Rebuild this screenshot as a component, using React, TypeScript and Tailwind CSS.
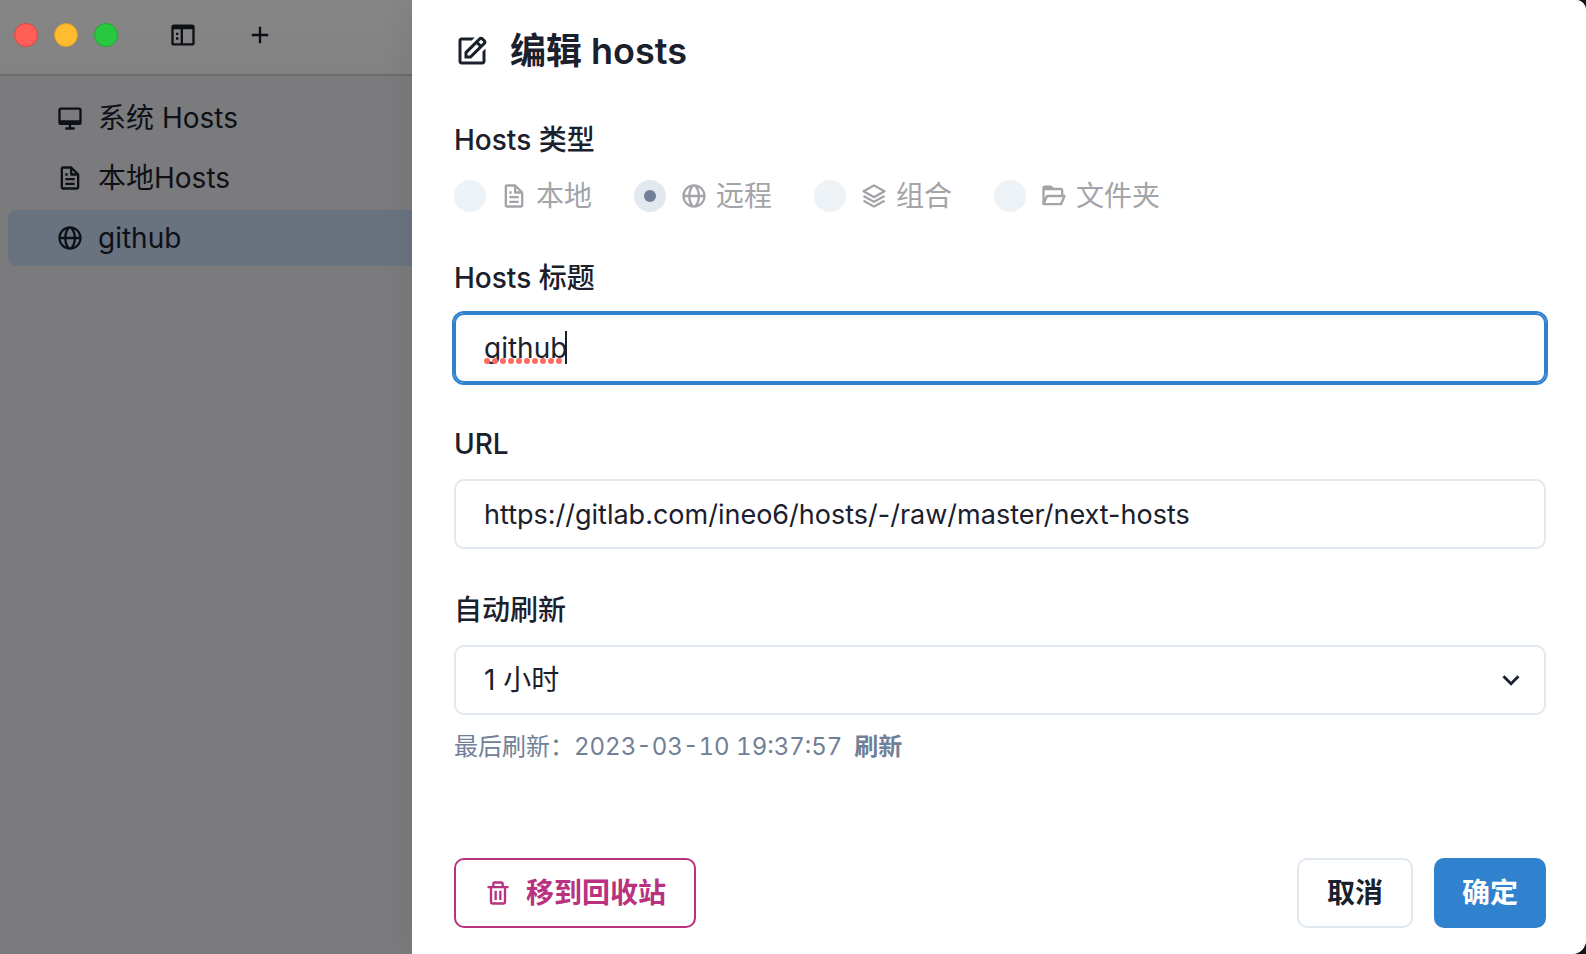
import React from "react";
import {
  BiDesktop,
  BiEdit,
  BiFile,
  BiFolderOpen,
  BiGlobe,
  BiLayer,
  BiPlus,
  BiSidebar,
  BiTrash,
} from "react-icons/bi";

const treeItems = [
  { name: "系统 Hosts", Icon: BiDesktop, selected: false },
  { name: "本地Hosts", Icon: BiFile, selected: false },
  { name: "github", Icon: BiGlobe, selected: true },
];

const hostTypes = [
  { value: "local", name: "本地", Icon: BiFile },
  { value: "remote", name: "远程", Icon: BiGlobe },
  { value: "group", name: "组合", Icon: BiLayer },
  { value: "folder", name: "文件夹", Icon: BiFolderOpen },
];

function Sidebar() {
  return (
    <aside className="flex w-[412px] shrink-0 flex-col bg-[#7b7b7d] text-[#0d1016]">
      <header className="flex h-[76px] items-center border-b-2 border-[#6b6b6b] bg-gradient-to-b from-[#868686] to-[#828282] pb-1 pl-3.5">
        <div className="flex gap-4">
          <span className="size-6 rounded-full border border-[#e0443e] bg-[#ff5f57]" />
          <span className="size-6 rounded-full border border-[#dea123] bg-[#febc2e]" />
          <span className="size-6 rounded-full border border-[#1aab29] bg-[#28c840]" />
        </div>
        <div className="ml-[51px] flex gap-[49px]">
          <button type="button" aria-label="Toggle sidebar">
            <BiSidebar className="size-7" />
          </button>
          <button type="button" aria-label="Add">
            <BiPlus className="size-7" />
          </button>
        </div>
      </header>
      <ul className="flex flex-col gap-1 pt-3.5 pl-2">
        {treeItems.map(({ name, Icon, selected }) => (
          <li key={name}>
            <button
              type="button"
              className={
                selected
                  ? "flex h-14 w-full items-center gap-3.5 rounded-l-lg bg-[#69737f] pl-12"
                  : "flex h-14 w-full items-center gap-3.5 rounded-l-lg pl-12"
              }
            >
              <Icon className="size-7" />
              <span>{name}</span>
            </button>
          </li>
        ))}
      </ul>
    </aside>
  );
}

function HostTypeField() {
  return (
    <fieldset>
      <legend className="mb-3.5 font-medium">Hosts 类型</legend>
      <div className="flex flex-wrap gap-x-[42px]">
        {hostTypes.map(({ value, name, Icon }) => (
          <label key={value} className="flex items-center gap-3.5">
            <input
              type="radio"
              name="type"
              value={value}
              defaultChecked={value === "remote"}
              disabled
              className="grid size-8 appearance-none place-content-center rounded-full bg-[#edf2f7] before:size-3 before:rounded-full checked:bg-[#e2e8f0] checked:before:bg-[#718096]"
            />
            <span className="flex items-center gap-2 text-[#a3a4a8]">
              <Icon className="size-7" />
              {name}
            </span>
          </label>
        ))}
      </div>
    </fieldset>
  );
}

export default function App() {
  return (
    <div className="bg-[#14141c]">
      <div
        lang="zh-CN"
        className="flex min-h-screen overflow-hidden rounded-tr-[10px] rounded-br-[14px] bg-white font-[Inter,'Noto_Sans_CJK_SC',sans-serif] text-[28px] leading-[42px] text-[#1a202c]"
      >
        <Sidebar />
        <main className="relative flex min-w-0 flex-1 flex-col bg-white pr-10 pl-[42px] shadow-[0_0_30px_rgba(0,0,0,0.08)]">
          <header className="flex items-center gap-5 pt-6 pb-[41px]">
            <BiEdit className="size-9" />
            <h1 className="text-4xl leading-[54px] font-semibold">编辑 hosts</h1>
          </header>

          <form className="flex flex-1 flex-col">
            <div className="flex flex-col gap-10">
              <HostTypeField />

              <div className="flex flex-col gap-3.5">
                <label htmlFor="title" className="font-medium">
                  Hosts 标题
                </label>
                <div className="relative">
                  <input
                    id="title"
                    type="text"
                    defaultValue="github"
                    spellCheck={false}
                    className="h-[70px] w-full rounded-[10px] border-2 border-[#3182ce] px-7 ring-2 ring-[#3182ce] outline-none"
                  />
                  <svg
                    className="pointer-events-none absolute top-[45px] left-[30px]"
                    width="80"
                    height="6"
                    fill="#ff6a62"
                    aria-hidden="true"
                  >
                    {[3, 11, 19, 27, 35, 43, 51, 59, 67, 75].map((cx) => (
                      <circle key={cx} cx={cx} cy="3" r="3" />
                    ))}
                  </svg>
                  <span className="pointer-events-none absolute top-[18px] left-[111px] h-[33px] w-0.5 bg-[#1a202c]" />
                </div>
              </div>

              <div className="flex flex-col gap-3.5">
                <label htmlFor="url" className="font-medium">
                  URL
                </label>
                <input
                  id="url"
                  type="text"
                  defaultValue="https://gitlab.com/ineo6/hosts/-/raw/master/next-hosts"
                  className="h-[70px] w-full rounded-[10px] border-2 border-[#e2e8f0] px-7 text-[27px] outline-none"
                />
              </div>

              <div className="flex flex-col gap-3.5">
                <label htmlFor="refresh" className="font-medium">
                  自动刷新
                </label>
                <div className="relative">
                  <select
                    id="refresh"
                    defaultValue="1"
                    className="h-[70px] w-full appearance-none rounded-[10px] border-2 border-[#e2e8f0] bg-white px-7 outline-none"
                  >
                    <option value="1">1 小时</option>
                  </select>
                  <svg
                    viewBox="0 0 24 24"
                    fill="currentColor"
                    className="pointer-events-none absolute top-[18px] right-[18px] size-[34px]"
                    aria-hidden="true"
                  >
                    <path d="M16.59 8.59L12 13.17 7.41 8.59 6 10l6 6 6-6z" />
                  </svg>
                </div>
                <div className="flex items-center gap-3 text-2xl leading-9 text-[#718096]">
                  <span className="tabular-nums">最后刷新：2023-03-10 19:37:57</span>
                  <button type="button" className="font-semibold">
                    刷新
                  </button>
                </div>
              </div>
            </div>

            <footer className="mt-auto flex items-center gap-[21px] pt-10 pb-[26px] font-semibold">
              <button
                type="button"
                className="mr-auto flex h-[70px] items-center gap-3.5 rounded-[10px] border-2 border-[#b83280] px-7 text-[#b83280]"
              >
                <BiTrash className="size-7" />
                移到回收站
              </button>
              <button type="button" className="h-[70px] rounded-[10px] border-2 border-[#e2e8f0] px-7">
                取消
              </button>
              <button type="submit" className="h-[70px] rounded-[10px] bg-[#3182ce] px-7 text-white">
                确定
              </button>
            </footer>
          </form>
        </main>
      </div>
    </div>
  );
}
